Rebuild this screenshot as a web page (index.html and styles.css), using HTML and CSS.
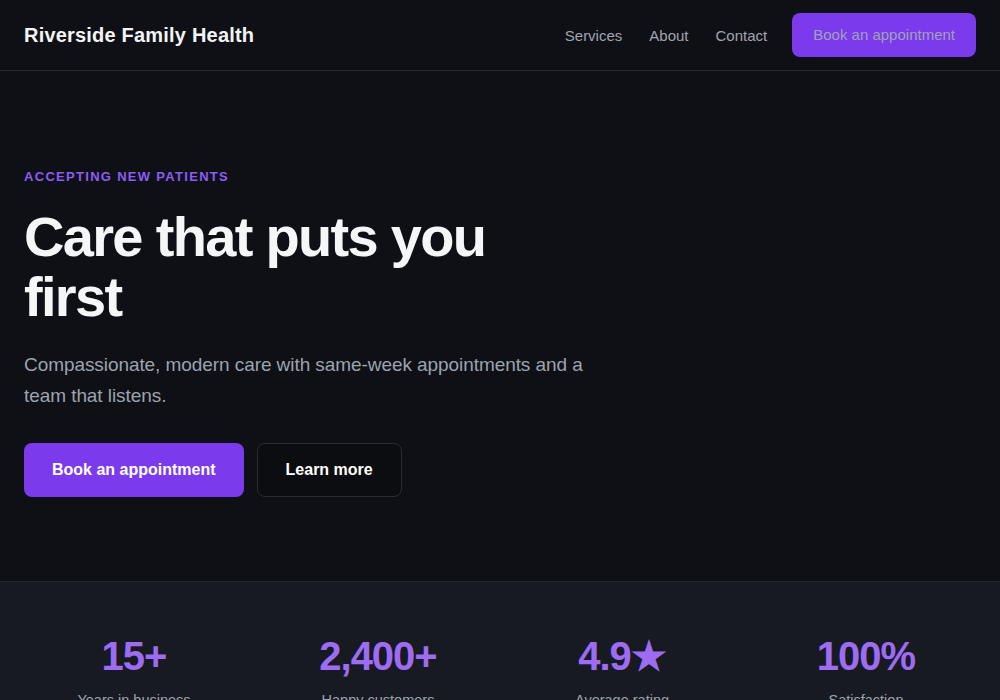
FILE: index.html
```html
<!DOCTYPE html>
<html lang="en">
<head>
<meta charset="utf-8">
<title>Riverside Family Health</title>
<link rel="stylesheet" href="styles.css">
</head>
<body>
<header class="site-header">
  <div class="brand">Riverside Family Health</div>
  <nav class="nav">
    <a class="nav-link" href="#">Services</a>
    <a class="nav-link" href="#">About</a>
    <a class="nav-link" href="#">Contact</a>
    <a class="nav-cta" href="#">Book an appointment</a>
  </nav>
</header>
<main>
  <section class="hero">
    <p class="eyebrow">ACCEPTING NEW PATIENTS</p>
    <h1 class="hero-title">Care that puts you first</h1>
    <p class="hero-lead">Compassionate, modern care with same-week appointments and a team that listens.</p>
    <div class="hero-actions">
      <a class="btn btn-primary" href="#">Book an appointment</a>
      <a class="btn btn-outline" href="#">Learn more</a>
    </div>
  </section>
  <section class="stats">
    <div class="stat">
      <div class="stat-value">15+</div>
      <div class="stat-label">Years in business</div>
    </div>
    <div class="stat">
      <div class="stat-value">2,400+</div>
      <div class="stat-label">Happy customers</div>
    </div>
    <div class="stat">
      <div class="stat-value">4.9★</div>
      <div class="stat-label">Average rating</div>
    </div>
    <div class="stat">
      <div class="stat-value">100%</div>
      <div class="stat-label">Satisfaction</div>
    </div>
  </section>
</main>
</body>
</html>
```

FILE: styles.css
```css
* { box-sizing: border-box; }
html, body { margin: 0; padding: 0; }
body {
  background: #0f1015;
  color: #f3f4f6;
  font-family: "Liberation Sans", Arial, sans-serif;
}
a { text-decoration: none; }

.site-header {
  display: flex;
  align-items: center;
  justify-content: space-between;
  height: 71px;
  padding: 0 24px;
  border-bottom: 1px solid #25262e;
}
.brand {
  font-size: 20px;
  font-weight: 700;
  letter-spacing: 0.2px;
  color: #f3f4f6;
}
.nav {
  display: flex;
  align-items: center;
  gap: 27px;
}
.nav-link {
  font-size: 15px;
  color: #a1a5b0;
}
.nav-cta {
  font-size: 15px;
  line-height: 20px;
  color: #a1a1b8;
  background: #7c3aed;
  border-radius: 8px;
  padding: 12px 21px;
  margin-left: -2px;
}

.hero {
  padding: 97px 24px 84px;
  border-bottom: 1px solid #25262e;
}
.eyebrow {
  margin: 0;
  font-size: 13px;
  line-height: 18px;
  font-weight: 700;
  letter-spacing: 0.1em;
  color: #8b5cf6;
}
.hero-title {
  margin: 21px 0 0;
  max-width: 560px;
  font-size: 56px;
  line-height: 60px;
  font-weight: 700;
  letter-spacing: -0.03em;
  color: #f5f6f8;
}
.hero-lead {
  margin: 22px 0 0;
  max-width: 600px;
  font-size: 19px;
  line-height: 31px;
  letter-spacing: -0.07px;
  color: #9ca3af;
}
.hero-actions {
  display: flex;
  gap: 13px;
  margin-top: 32px;
}
.btn {
  display: inline-flex;
  align-items: center;
  justify-content: center;
  height: 54px;
  padding: 0 28px;
  border-radius: 8px;
  font-size: 16px;
  font-weight: 700;
  color: #ffffff;
}
.btn-primary {
  background: #7c3aed;
}
.btn-outline {
  background: #0c0d11;
  border: 1px solid #2a2b33;
}

.stats {
  background: #181a21;
  display: grid;
  grid-template-columns: repeat(4, 1fr);
  gap: 24px;
  padding: 54px 24px 48px;
}
.stat {
  text-align: center;
}
.stat-value {
  font-size: 40px;
  line-height: 40px;
  font-weight: 700;
  letter-spacing: -0.025em;
  color: #9d6cf3;
}
.stat-label {
  margin-top: 16px;
  font-size: 14.5px;
  color: #9ca3af;
}
```
